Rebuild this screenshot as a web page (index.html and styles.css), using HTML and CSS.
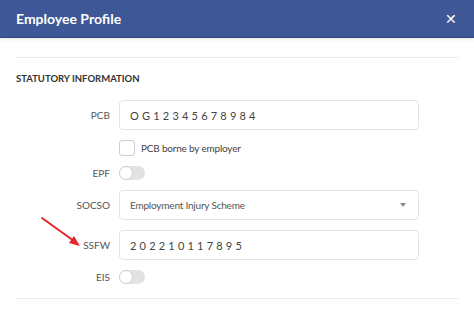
FILE: index.html
```html
<!DOCTYPE html>
<html lang="en">
<head>
  <meta charset="UTF-8" />
  <meta name="viewport" content="width=device-width, initial-scale=1.0"/>
  <title>Employee Profile</title>
  <link rel="stylesheet" href="styles.css">
</head>
<body>
  <div class="modal">
    <div class="modal-header">
      <h1>Employee Profile</h1>
      <span class="close">&#10005;</span>
    </div>

    <div class="modal-body">
      <hr class="divider top" />
      <h2>STATUTORY INFORMATION</h2>

      <div class="form-grid">
        <label>PCB</label>
        <div class="field spaced">OG12345678984</div>

        <span></span>
        <div class="check-row">
          <span class="checkbox"></span>
          <span>PCB borne by employer</span>
        </div>

        <label>EPF</label>
        <div><span class="toggle"></span></div>

        <label>SOCSO</label>
        <div class="field select">
          <span>Employment Injury Scheme</span>
          <span class="caret"></span>
        </div>

        <label>SSFW</label>
        <div class="field spaced">202210117895</div>

        <label>EIS</label>
        <div><span class="toggle"></span></div>
      </div>

      <hr class="divider bottom" />
    </div>

    <!-- annotation arrow -->
    <svg class="pointer" width="60" height="40" viewBox="0 0 60 40">
      <line x1="4" y1="4" x2="36" y2="27" stroke="#e3262b" stroke-width="2" stroke-linecap="round"/>
      <polygon points="42,32 31,29 36,22" fill="#e3262b"/>
    </svg>
  </div>
</body>
</html>
```

FILE: styles.css
```css
body {
  margin: 0;
  font-family: Lato, "Open Sans", sans-serif;
  background: #fff;
  color: #555;
}

.modal {
  position: relative;
  width: 474px;
  height: 314px;
  overflow: hidden;
}

.modal-header {
  height: 37px;
  background: #3e5796;
  border-bottom: 1px solid #2f4478;
  box-shadow: 0 2px 3px rgba(0,0,0,0.08);
  display: flex;
  align-items: center;
  justify-content: space-between;
  padding: 0 17px 0 16px;
}

.modal-header h1 {
  margin: 0;
  font-size: 14px;
  font-weight: 700;
  color: #fff;
}

.close {
  color: #fff;
  font-size: 14px;
}

.modal-body {
  padding: 0 16px;
}

.divider {
  border: none;
  height: 1px;
  background: #ececec;
  margin: 0;
}

.divider.top {
  margin-top: 19px;
}

h2 {
  margin: 13px 0 13px;
  line-height: 16px;
  font-size: 9.5px;
  font-weight: 700;
  color: #333;
}

.form-grid {
  display: grid;
  grid-template-columns: 94px 300px;
  column-gap: 9px;
  row-gap: 10px;
  align-items: center;
}

.form-grid label {
  text-align: right;
  font-size: 10px;
  color: #555;
}

.field {
  box-sizing: border-box;
  height: 30px;
  border: 1px solid #e4e4e4;
  border-radius: 4px;
  display: flex;
  align-items: center;
  padding: 0 10px;
  font-size: 10px;
  color: #444;
}

.spaced {
  font-size: 11px;
  letter-spacing: 3.2px;
}

.select {
  justify-content: space-between;
  color: #555;
  letter-spacing: -0.2px;
  padding-right: 12px;
}

.caret {
  width: 0;
  height: 0;
  border-left: 3.5px solid transparent;
  border-right: 3.5px solid transparent;
  border-top: 4px solid #888;
}

.check-row {
  display: flex;
  align-items: center;
  gap: 6px;
  font-size: 10px;
  letter-spacing: -0.2px;
  color: #444;
}

.checkbox {
  box-sizing: border-box;
  width: 16px;
  height: 16px;
  border: 1px solid #cfcfcf;
  border-radius: 3px;
}

.toggle {
  position: relative;
  display: block;
  width: 26px;
  height: 14px;
  border-radius: 7px;
  background: #e2e2e2;
}

.toggle::after {
  content: "";
  position: absolute;
  left: 0;
  top: 0;
  box-sizing: border-box;
  width: 14px;
  height: 14px;
  border-radius: 50%;
  background: #fff;
  border: 1px solid #cfcfcf;
}

.divider.bottom {
  margin-top: 14px;
}

.pointer {
  position: absolute;
  left: 38px;
  top: 214px;
}
```
